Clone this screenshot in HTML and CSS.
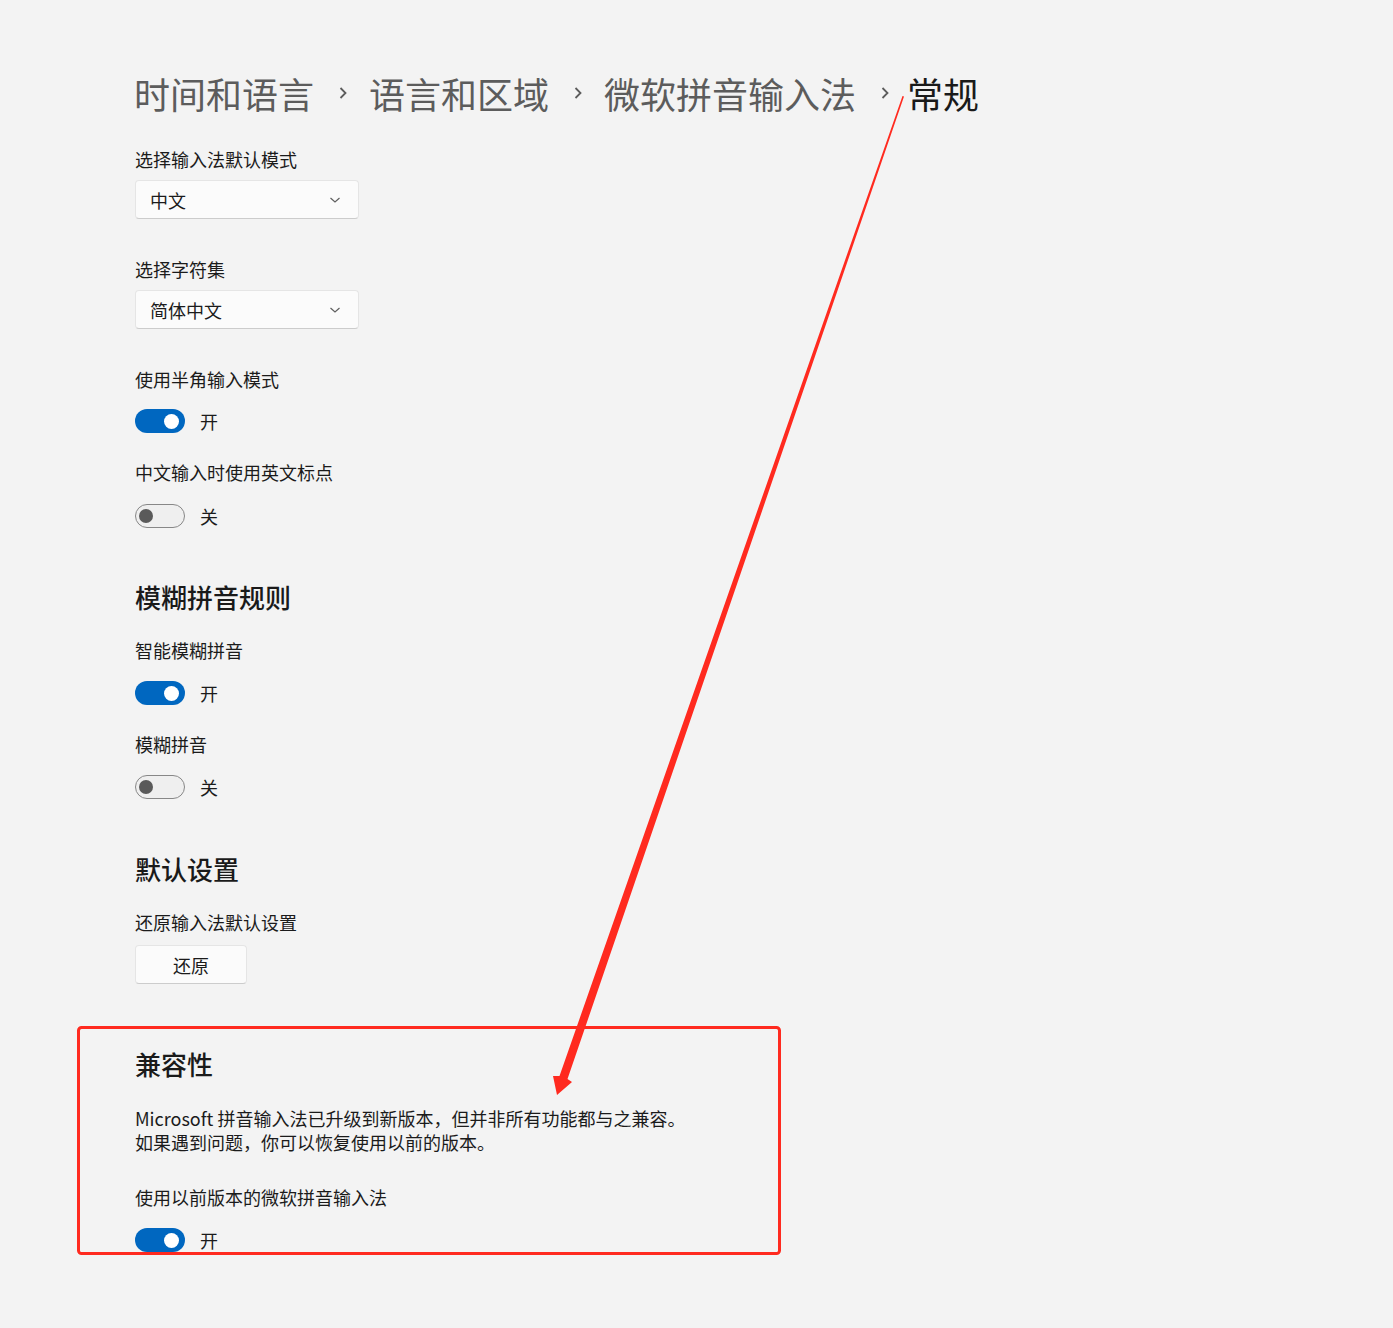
FILE: index.html
```html
<!DOCTYPE html>
<html lang="zh-CN">
<head>
<meta charset="utf-8">
<title>常规</title>
<link rel="stylesheet" href="styles.css">
</head>
<body>
<main class="page">
  <nav class="crumbs">
    <span class="crumb">时间和语言</span>
    <svg class="sep" width="8" height="14" viewBox="0 0 8 14"><path d="M1.5 2 L6.5 7 L1.5 12" fill="none" stroke="#5c5c5c" stroke-width="1.8"/></svg>
    <span class="crumb">语言和区域</span>
    <svg class="sep" width="8" height="14" viewBox="0 0 8 14"><path d="M1.5 2 L6.5 7 L1.5 12" fill="none" stroke="#5c5c5c" stroke-width="1.8"/></svg>
    <span class="crumb">微软拼音输入法</span>
    <svg class="sep last" width="8" height="14" viewBox="0 0 8 14"><path d="M1.5 2 L6.5 7 L1.5 12" fill="none" stroke="#5c5c5c" stroke-width="1.8"/></svg>
    <span class="crumb current">常规</span>
  </nav>

  <div class="label g30">选择输入法默认模式</div>
  <div class="select"><span>中文</span><svg class="chev" width="12" height="8" viewBox="0 0 12 8"><path d="M1.5 2 L6 6 L10.5 2" fill="none" stroke="#5f5f5f" stroke-width="1.2"/></svg></div>

  <div class="label g38">选择字符集</div>
  <div class="select"><span>简体中文</span><svg class="chev" width="12" height="8" viewBox="0 0 12 8"><path d="M1.5 2 L6 6 L10.5 2" fill="none" stroke="#5f5f5f" stroke-width="1.2"/></svg></div>

  <div class="label g38">使用半角输入模式</div>
  <div class="toggle-row g18"><span class="toggle on"><span class="knob"></span></span><span class="state">开</span></div>

  <div class="label g27">中文输入时使用英文标点</div>
  <div class="toggle-row g20"><span class="toggle off"><span class="knob"></span></span><span class="state">关</span></div>

  <h2 class="heading g51">模糊拼音规则</h2>
  <div class="label g23">智能模糊拼音</div>
  <div class="toggle-row g19"><span class="toggle on"><span class="knob"></span></span><span class="state">开</span></div>

  <div class="label g27">模糊拼音</div>
  <div class="toggle-row g19"><span class="toggle off"><span class="knob"></span></span><span class="state">关</span></div>

  <h2 class="heading g52">默认设置</h2>
  <div class="label g23">还原输入法默认设置</div>
  <button class="btn g11">还原</button>

  <h2 class="heading g62">兼容性</h2>
  <p class="para g24">Microsoft 拼音输入法已升级到新版本，但并非所有功能都与之兼容。<br>如果遇到问题，你可以恢复使用以前的版本。</p>
  <div class="label g31">使用以前版本的微软拼音输入法</div>
  <div class="toggle-row g19"><span class="toggle on"><span class="knob"></span></span><span class="state">开</span></div>
</main>

<svg class="annot" width="1393" height="1328" viewBox="0 0 1393 1328">
  <rect x="78.5" y="1027.5" width="701" height="226" rx="3" fill="none" stroke="#ff2a1f" stroke-width="3"/>
  <polygon points="902.5,96 904,96.5 567.5,1079 572,1082 557,1095 553,1076 559.5,1076" fill="#ff2a1f"/>
</svg>
</body>
</html>
```

FILE: styles.css
```css
html, body {
  margin: 0;
  padding: 0;
  background: #f3f3f3;
}
body {
  font-family: "Noto Sans CJK SC", "Noto Sans", sans-serif;
  color: #1b1b1b;
  position: relative;
  min-height: 1328px;
}
.page {
  padding: 69px 0 0 134px;
}
.crumbs {
  display: flex;
  align-items: center;
  height: 48px;
  font-size: 36px;
  line-height: 48px;
  color: #5c5c5c;
}
.crumb {
  white-space: nowrap;
}
.crumb.current {
  color: #1a1a1a;
}
.sep {
  margin: 0 22px 0 25px;
  flex: none;
}
.sep.last {
  margin: 0 18px 0 25px;
}
.label {
  font-size: 18px;
  line-height: 24px;
  height: 24px;
  padding-left: 1px;
}
.select {
  margin: 9px 0 0 1px;
  box-sizing: border-box;
  width: 224px;
  height: 39px;
  background: #fbfbfb;
  border: 1px solid #e5e5e5;
  border-bottom-color: #cccccc;
  border-radius: 4px;
  display: flex;
  align-items: center;
  justify-content: space-between;
  padding: 0 17px 0 14px;
  font-size: 18px;
}
.chev { flex: none; }
.toggle-row {
  height: 24px;
  display: flex;
  align-items: center;
  padding-left: 1px;
}
.toggle {
  box-sizing: border-box;
  width: 50px;
  height: 24px;
  border-radius: 12px;
  display: flex;
  align-items: center;
  flex: none;
}
.toggle.on {
  background: #0067c0;
  justify-content: flex-end;
  padding-right: 6px;
}
.toggle.on .knob {
  width: 15px;
  height: 15px;
  border-radius: 50%;
  background: #ffffff;
}
.toggle.off {
  background: #efefef;
  border: 1px solid #878787;
  padding-left: 3px;
}
.toggle.off .knob {
  width: 14px;
  height: 14px;
  border-radius: 50%;
  background: #5a5a5a;
}
.state {
  margin-left: 15px;
  font-size: 18px;
  line-height: 24px;
}
.heading {
  margin: 0;
  padding-left: 1px;
  font-size: 26px;
  line-height: 36px;
  height: 36px;
  font-weight: 500;
  color: #1a1a1a;
}
.btn {
  margin: 0 0 0 1px;
  display: block;
  box-sizing: border-box;
  width: 112px;
  height: 39px;
  background: #fbfbfb;
  border: 1px solid #e5e5e5;
  border-bottom-color: #cccccc;
  border-radius: 4px;
  font-family: inherit;
  font-size: 18px;
  color: #1b1b1b;
  padding: 0;
}
.para {
  margin: 0;
  padding-left: 1px;
  font-size: 18px;
  line-height: 24px;
}
.annot {
  position: absolute;
  left: 0;
  top: 0;
  pointer-events: none;
}

/* vertical rhythm */
.g11 { margin-top: 11px; }
.g18 { margin-top: 18px; }
.g19 { margin-top: 19px; }
.g20 { margin-top: 20px; }
.g23 { margin-top: 23px; }
.g24 { margin-top: 24px; }
.g27 { margin-top: 27px; }
.g30 { margin-top: 30px; }
.g31 { margin-top: 31px; }
.g38 { margin-top: 38px; }
.g51 { margin-top: 51px; }
.g52 { margin-top: 52px; }
.g62 { margin-top: 62px; }
```
